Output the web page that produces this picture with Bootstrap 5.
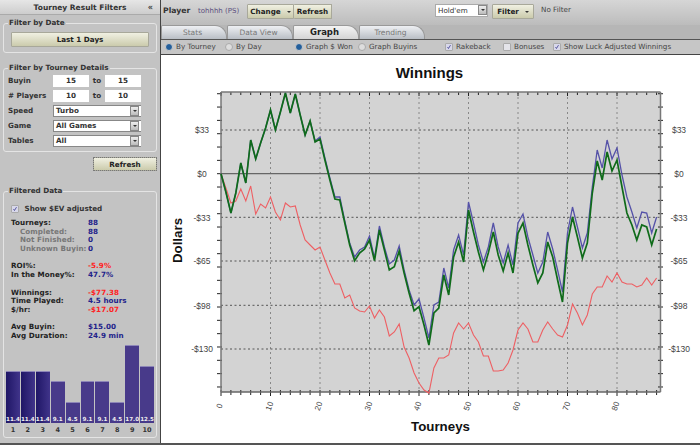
<!DOCTYPE html>
<html lang="en">
<head>
<meta charset="utf-8">
<title>Tourney Result Filters</title>
<link href="https://cdn.jsdelivr.net/npm/bootstrap@5.3.0/dist/css/bootstrap.min.css" rel="stylesheet">
<style>
html,body{height:445px;overflow:hidden;background:#c4c4c4;}
body{font-family:"DejaVu Sans",sans-serif;font-size:7.2px;color:#222;line-height:10px;}
.shell{width:700px;height:445px;border-bottom:2px solid #555;}
.side{width:160px;background:#c3c3c3;flex:none;}
.side-head{height:15px;font-weight:700;font-size:7.5px;line-height:15px;text-align:center;color:#333;background:linear-gradient(#e6e6e6,#cdcdcd);border-bottom:1px solid #aaa;position:relative;}
.collapse-mark{position:absolute;right:7px;top:0;color:#444;font-size:8px;}
.grp{border:1px solid #e4e4e4;border-radius:3px;margin:0 3px;min-width:0;}
.grp legend{float:none;width:auto;padding:0 1px;font-size:7.2px;line-height:10px;font-weight:700;color:#333;background:#c3c3c3;margin-bottom:0;}
.grp-date{margin-top:3px;padding:4px 7px 5px;}
.grp-date legend{margin-left:-3px;}
.grp-tourney{margin-top:10px;padding:2px 5px 4px 4px;}
.grp-tourney legend{margin-left:0;}
.grp-data{margin-top:15px;height:252px;padding:0 2px;}
.grp-data legend{margin-left:2px;}
.skin-btn{--bs-btn-padding-y:0;--bs-btn-padding-x:0;--bs-btn-font-size:7.2px;--bs-btn-font-weight:700;--bs-btn-line-height:13px;--bs-btn-border-radius:1px;--bs-btn-color:#222;--bs-btn-border-color:#a8a89a;background:linear-gradient(#f0f0e2,#cbcbac);}
.btn-date{height:15px;}
.btn-side{width:64px;height:14px;margin:5px 3px 0 auto;outline:1px dotted #777;outline-offset:-1px;}
.frow{height:12px;margin-bottom:3px;}
.frow:last-child{margin-bottom:0;}
.flabel{width:45px;font-weight:700;color:#333;line-height:12px;flex:none;}
.num{width:36px;height:12px;background:#fff;border:0;text-align:center;font-weight:700;font-size:7.2px;color:#333;padding:0;line-height:12px;}
.sep{width:16px;text-align:center;font-weight:700;line-height:12px;color:#333;flex:none;}
.pick{width:88px;height:12px;background:#fff;border:1px solid #888;border-right:0;font-weight:700;color:#333;line-height:10px;padding:0 2px;display:flex;justify-content:space-between;align-items:center;}
.pick-arrow{width:9px;height:10px;margin-right:0;background:linear-gradient(#eee,#bbb);border:1px solid #888;display:flex;align-items:center;justify-content:center;flex:none;}
.tri{width:0;height:0;border-left:2px solid transparent;border-right:2px solid transparent;border-top:2px solid #333;}
.form-check-input.mini{width:8px;height:8px;margin:0;flex:none;border-color:#aaa;background-color:#ddd;}
.form-check-input.mini[type=checkbox]{border-radius:1px;background-color:#e4e4ea;}
.form-check-input.mini[type=checkbox]:checked{background-color:#d8d8ea;background-image:url("data:image/svg+xml,%3csvg xmlns='http://www.w3.org/2000/svg' viewBox='0 0 8 8'%3e%3cpath fill='none' stroke='%2333338a' stroke-width='1' d='M2 4l1.3 2L6 1.5'/%3e%3c/svg%3e");background-size:100% 100%;}
.form-check-input.mini[type=radio]:checked{background-color:#235f9c;border-color:#ccc;background-image:none;}
.ev-row{height:10px;margin:8px 0 5px 5px;gap:3px;font-weight:700;color:#333;}
.stats{padding-left:5px;font-weight:700;line-height:8.7px;letter-spacing:.05px;}
.srow{height:8.7px;white-space:nowrap;}
.skey{width:77px;flex:none;color:#222;}
.skey.sub{padding-left:9px;color:#777;}
.v-blue{color:#22228a;}
.v-red{color:#f22;}
.gap-line{margin-top:8.7px;}
.bars{height:78px;margin-top:4px;gap:1px;}
.histbar{width:14px;background:#483a8a;color:#eee;font-size:5.6px;line-height:8px;font-weight:700;text-align:center;border-top:1px solid #8d86b8;white-space:nowrap;}
.histbar.deep{background:linear-gradient(90deg,#1f1666,#40348a);}
.barnums{gap:1px;margin-top:2px;}
.barnums span{width:14px;text-align:center;font-weight:700;font-size:6.5px;color:#333;}
.main{min-width:0;flex:1 1 auto;border-left:1px solid #444;}
.topbar{height:25px;background:linear-gradient(#d6d6d6,#bcbcbc);padding:4px 0 0 2px;}
.pl-label{font-weight:700;font-size:7.7px;width:35px;color:#333;margin-top:2px;}
.pl-name{width:49px;color:#5a4f7e;margin-top:2px;font-size:7px;}
.tb-btn{height:15px;}
.tb-change{width:47px;border-radius:1px 0 0 1px;}
.tb-refresh{width:38px;border-left:0;}
.caret-mark{width:0;height:0;display:inline-block;border-left:2px solid transparent;border-right:2px solid transparent;border-top:2px solid #333;margin-left:6px;vertical-align:middle;}
.game-pick{width:53px;height:13px;margin-left:103px;background:#fff;border:1px solid #aaa;color:#333;padding:0 0 0 2px;line-height:11px;display:flex;justify-content:space-between;}
.tb-filter{width:42px;margin-left:4px;}
.no-filter{margin:1px 0 0 7px;color:#444;line-height:10px;}
.tabstrip{height:14px;background:#b6b6b6;border:0;flex-wrap:nowrap;}
.tabstrip .nav-link{height:14px;width:66px;padding:0 3px 0 0;border:1px solid #999;border-bottom:0;border-radius:2px 12px 0 0;background:linear-gradient(#eef0f3,#b9bec5);font-size:7.5px;line-height:13px;text-align:center;color:#777;margin:0;}
.tabstrip .nav-link.active{background:linear-gradient(#f4f4f4,#d4d4d4);color:#222;font-weight:700;font-size:8.5px;border-color:#999;}
.optbar{height:16px;background:#c6c6c6;border-top:1px solid #555;border-bottom:1px solid #444;color:#444;padding-left:4px;}
.opt{gap:3px;line-height:10px;white-space:nowrap;flex:none;}
.o1{width:60px;}.o2{width:70px;}.o3{width:63px;}.o4{width:87px;}.o5{width:58px;}.o6{width:50px;}
.plot-box{background:#fff;flex:1 1 auto;min-height:0;}
.plot-box svg{display:block;}
.t-title{font:700 15px "Liberation Sans",sans-serif;fill:#111;}
.t-axis{font:700 13.3px "Liberation Sans",sans-serif;fill:#111;}
.t-y{font:8.5px "Liberation Sans",sans-serif;fill:#444;text-anchor:middle;}
.t-x{font:8px "Liberation Sans",sans-serif;fill:#444;text-anchor:middle;}
</style>
</head>
<body>
<div class="shell d-flex">
  <aside class="side d-flex flex-column">
    <div class="side-head">Tourney Result Filters<span class="collapse-mark">«</span></div>
    <fieldset class="grp grp-date">
      <legend>Filter by Date</legend>
      <button type="button" class="btn skin-btn btn-date w-100 d-block">Last 1 Days</button>
    </fieldset>
    <fieldset class="grp grp-tourney">
      <legend>Filter by Tourney Details</legend>
      <div class="frow d-flex"><span class="flabel">Buyin</span><input class="num" value="15" aria-label="Buyin from"><span class="sep">to</span><input class="num" value="15" aria-label="Buyin to"></div>
      <div class="frow d-flex"><span class="flabel"># Players</span><input class="num" value="10" aria-label="Players from"><span class="sep">to</span><input class="num" value="10" aria-label="Players to"></div>
      <div class="frow d-flex"><span class="flabel">Speed</span><div class="pick"><span>Turbo</span><span class="pick-arrow"><span class="tri"></span></span></div></div>
      <div class="frow d-flex"><span class="flabel">Game</span><div class="pick"><span>All Games</span><span class="pick-arrow"><span class="tri"></span></span></div></div>
      <div class="frow d-flex"><span class="flabel">Tables</span><div class="pick"><span>All</span><span class="pick-arrow"><span class="tri"></span></span></div></div>
    </fieldset>
    <button type="button" class="btn skin-btn btn-side d-block">Refresh</button>
    <fieldset class="grp grp-data">
      <legend>Filtered Data</legend>
      <label class="ev-row d-flex align-items-center"><input class="form-check-input mini" type="checkbox" checked>&nbsp;Show $EV adjusted</label>
      <div class="stats">
        <div class="srow d-flex"><span class="skey">Tourneys:</span><span class="v-blue">88</span></div>
        <div class="srow d-flex"><span class="skey sub">Completed:</span><span class="v-blue">88</span></div>
        <div class="srow d-flex"><span class="skey sub">Not Finished:</span><span class="v-blue">0</span></div>
        <div class="srow d-flex"><span class="skey sub">Unknown Buyin:</span><span class="v-blue">0</span></div>
        <div class="srow d-flex gap-line"><span class="skey">ROI%:</span><span class="v-red">-5.9%</span></div>
        <div class="srow d-flex"><span class="skey">In the Money%:</span><span class="v-blue">47.7%</span></div>
        <div class="srow d-flex gap-line"><span class="skey">Winnings:</span><span class="v-red">-$77.38</span></div>
        <div class="srow d-flex"><span class="skey">Time Played:</span><span class="v-blue">4.5 hours</span></div>
        <div class="srow d-flex"><span class="skey">$/hr:</span><span class="v-red">-$17.07</span></div>
        <div class="srow d-flex gap-line"><span class="skey">Avg Buyin:</span><span class="v-blue">$15.00</span></div>
        <div class="srow d-flex"><span class="skey">Avg Duration:</span><span class="v-blue">24.9 min</span></div>
      </div>
      <div class="bars d-flex align-items-end">
        <div class="histbar deep d-flex flex-column justify-content-end" style="height:52px">11.4</div>
        <div class="histbar deep d-flex flex-column justify-content-end" style="height:52px">11.4</div>
        <div class="histbar deep d-flex flex-column justify-content-end" style="height:52px">11.4</div>
        <div class="histbar d-flex flex-column justify-content-end" style="height:42px">9.1</div>
        <div class="histbar d-flex flex-column justify-content-end" style="height:21px">4.5</div>
        <div class="histbar d-flex flex-column justify-content-end" style="height:42px">9.1</div>
        <div class="histbar d-flex flex-column justify-content-end" style="height:42px">9.1</div>
        <div class="histbar d-flex flex-column justify-content-end" style="height:21px">4.5</div>
        <div class="histbar d-flex flex-column justify-content-end" style="height:78px">17.0</div>
        <div class="histbar d-flex flex-column justify-content-end" style="height:57px">12.5</div>
      </div>
      <div class="barnums d-flex"><span>1</span><span>2</span><span>3</span><span>4</span><span>5</span><span>6</span><span>7</span><span>8</span><span>9</span><span>10</span></div>
    </fieldset>
  </aside>
  <main class="main d-flex flex-column">
    <div class="topbar d-flex align-items-start">
      <span class="pl-label">Player</span>
      <span class="pl-name">tohhhh (PS)</span>
      <button type="button" class="btn skin-btn tb-btn tb-change">Change<span class="caret-mark"></span></button>
      <button type="button" class="btn skin-btn tb-btn tb-refresh">Refresh</button>
      <div class="game-pick"><span>Hold'em</span><span class="pick-arrow"><span class="tri"></span></span></div>
      <button type="button" class="btn skin-btn tb-btn tb-filter">Filter<span class="caret-mark"></span></button>
      <span class="no-filter">No Filter</span>
    </div>
    <ul class="nav nav-tabs tabstrip">
      <li class="nav-item"><a class="nav-link" href="#">Stats</a></li>
      <li class="nav-item"><a class="nav-link" href="#">Data View</a></li>
      <li class="nav-item"><a class="nav-link active" href="#">Graph</a></li>
      <li class="nav-item"><a class="nav-link" href="#">Trending</a></li>
    </ul>
    <div class="optbar d-flex align-items-center">
      <label class="opt o1 d-flex align-items-center"><input class="form-check-input mini" type="radio" name="by" checked>By Tourney</label>
      <label class="opt o2 d-flex align-items-center"><input class="form-check-input mini" type="radio" name="by">By Day</label>
      <label class="opt o3 d-flex align-items-center"><input class="form-check-input mini" type="radio" name="gr" checked>Graph $ Won</label>
      <label class="opt o4 d-flex align-items-center"><input class="form-check-input mini" type="radio" name="gr">Graph Buyins</label>
      <label class="opt o5 d-flex align-items-center"><input class="form-check-input mini" type="checkbox" checked>Rakeback</label>
      <label class="opt o6 d-flex align-items-center"><input class="form-check-input mini" type="checkbox">Bonuses</label>
      <label class="opt o7 d-flex align-items-center"><input class="form-check-input mini" type="checkbox" checked>Show Luck Adjusted Winnings</label>
    </div>
    <div class="plot-box">
      <svg id="chart" width="539" height="388" viewBox="161 55 539 388" xmlns="http://www.w3.org/2000/svg">
        <rect x="221" y="92" width="439.5" height="300" fill="#d3d3d3"/>
        <g id="grid"></g>
        <polyline id="lred" fill="none" stroke="#ee5f63" stroke-width="1.1"/>
        <polyline id="lblue" fill="none" stroke="#5552a8" stroke-width="1.3"/>
        <polyline id="lgreen" fill="none" stroke="#0f6b1a" stroke-width="1.7"/>
        <text class="t-title" x="429.5" y="78" text-anchor="middle">Winnings</text>
        <text class="t-axis" x="0" y="0" text-anchor="middle" transform="translate(182 240.5) rotate(-90)">Dollars</text>
        <text class="t-axis" x="440.5" y="431" text-anchor="middle">Tourneys</text>
        <g>
          <text class="t-y" x="202" y="133">$33</text><text class="t-y" x="202" y="177">$0</text><text class="t-y" x="202" y="221">-$33</text><text class="t-y" x="202" y="264">-$65</text><text class="t-y" x="202" y="309">-$98</text><text class="t-y" x="202" y="352">-$130</text>
          <text class="t-y" x="679" y="133">$33</text><text class="t-y" x="679" y="177">$0</text><text class="t-y" x="679" y="221">-$33</text><text class="t-y" x="679" y="264">-$65</text><text class="t-y" x="679" y="309">-$98</text><text class="t-y" x="679" y="352">-$130</text>
        </g>
        <g>
          <text class="t-x" transform="translate(222 407) rotate(-70)">0</text>
          <text class="t-x" transform="translate(272 407) rotate(-70)">10</text>
          <text class="t-x" transform="translate(321 407) rotate(-70)">20</text>
          <text class="t-x" transform="translate(371 407) rotate(-70)">30</text>
          <text class="t-x" transform="translate(420 407) rotate(-70)">40</text>
          <text class="t-x" transform="translate(470 407) rotate(-70)">50</text>
          <text class="t-x" transform="translate(519 407) rotate(-70)">60</text>
          <text class="t-x" transform="translate(569 407) rotate(-70)">70</text>
          <text class="t-x" transform="translate(618 407) rotate(-70)">80</text>
        </g>
      </svg>
    </div>
  </main>
</div>
<script src="https://cdn.jsdelivr.net/npm/bootstrap@5.3.0/dist/js/bootstrap.bundle.min.js"></script>
<script>
(function(){
var green=[173.7,192,213,193,163,183,140,159,143,128,110,130,112,93,113,94,115,135,121,142,139,160,180,199,200,223,245,260.7,253,249,240,260.7,230,250,270,266.7,251,273,293,310.7,306.7,325,345,313,308,275,295,257,242,262,210,232,252,270,253,232,255,271,253,273,233,223,245,265,283,273,242,257,280,302,243,217,237,258,243,193,161,180,152,171,160,187,213,225,240,225,227,245,229];
var blue=[173.7,192,213,193,163,183,140,159,143,128,110,130,112,93,113,94,115,135,121,141,137,158,178,197,197,221,243,257,250,247,236,258,226,247,264,260,246,270,290,305,299,318,338,305,302,268,288,250,235,255,202,223,245,262,247,223,247,263,245,265,223,214,237,255,273,262,232,249,270,292,233,207,227,248,233,187,150,168,140,159,148,175,197,212,228,212,213,233,217];
var red=[173.7,188,203,201,189,201,186,214,204,208,197,212,220,203,207,206,225,240,245,250,247,260,273,284,284,298,295,308,311,312,306,318,310,317,336,332,324,347,358,373,383,390,393,368,358,358,355,333,323,329,323,335,342,356,356,371,371,370,363,350,330,323,329,342,342,330,322,329,335,337,325,304,313,325,315,294,287,287,276,282,273,282,284,284,287,285,278,285,278];
function pts(a){return a.map(function(y,i){return (221+4.95*i).toFixed(1)+','+y;}).join(' ');}
document.getElementById('lgreen').setAttribute('points',pts(green));
document.getElementById('lblue').setAttribute('points',pts(blue));
document.getElementById('lred').setAttribute('points',pts(red));
var s='';
function ln(x1,y1,x2,y2,c,w,d){s+='<line x1="'+x1+'" y1="'+y1+'" x2="'+x2+'" y2="'+y2+'" stroke="'+c+'" stroke-width="'+w+'"'+(d?' stroke-dasharray="'+d+'"':'')+'/>';}
var i,x,y;
for(i=1;i<=8;i++){x=221+49.5*i;ln(x,92,x,392,'#888',1,'2 3');}
[130,217.3,261,305.3,349].forEach(function(v){ln(221,v,661,v,'#555',1,'2 2.5');});
ln(221,173.7,661,173.7,'#666',1.2);
for(i=0;i<=44;i++){x=221+9.9*i;var maj=i%5==0;ln(x,92,x,maj?96:95,'#222',1);ln(x,maj?396:395,x,390,'#222',1);}
for(i=-6;i<=16;i++){y=173.7+13.33*i;if(y<92||y>392)continue;ln(217,y,222,y,'#222',1);ln(658,y,663,y,'#222',1);}
ln(221,92,660.5,92,'#777',1.5);ln(221,392,660.5,392,'#666',1.5);ln(221,92,221,392,'#777',1.5);ln(660.5,92,660.5,392,'#777',1.5);
document.getElementById('grid').innerHTML=s;
})();
</script>
</body>
</html>
